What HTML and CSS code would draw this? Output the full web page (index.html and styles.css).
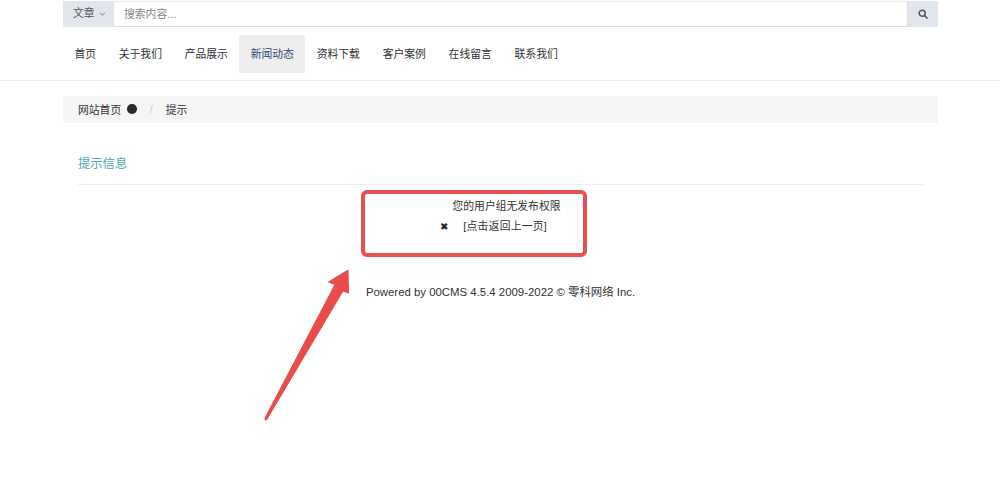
FILE: index.html
```html
<!DOCTYPE html>
<html lang="en">
<head>
    <meta charset="UTF-8">
    <title>提示信息</title>
    <link rel="stylesheet" href="styles.css">
</head>
<body>
    <header class="header">
        <div class="container">
            <div class="search">
                <div class="search-type">文章
                    <svg class="caret" viewBox="0 0 8 5" width="7" height="4"><path d="M1 1l3 3 3-3" fill="none" stroke="#667" stroke-width="1"/></svg>
                </div>
                <div class="search-input">搜索内容...</div>
                <div class="search-btn">
                    <svg viewBox="0 0 12 12" width="10" height="10"><circle cx="5" cy="5" r="3.6" fill="none" stroke="#555" stroke-width="1.8"/><path d="M7.8 7.800l3 3" stroke="#555" stroke-width="2" stroke-linecap="round"/></svg>
                </div>
            </div>
            <nav class="nav">
                <a class="nav-item">首页</a>
                <a class="nav-item">关于我们</a>
                <a class="nav-item">产品展示</a>
                <a class="nav-item active">新闻动态</a>
                <a class="nav-item">资料下载</a>
                <a class="nav-item">客户案例</a>
                <a class="nav-item">在线留言</a>
                <a class="nav-item">联系我们</a>
            </nav>
        </div>
    </header>

    <div class="container">
        <div class="breadcrumb">
            <span>网站首页</span>
            <span class="dot"></span>
            <span class="sep">/</span>
            <span>提示</span>
        </div>
        <div class="panel">
            <h3 class="panel-title">提示信息</h3>
            <div class="message">
                <div class="message-text">您的用户组无发布权限</div>
                <div class="message-back"><span class="cross">&#10006;</span><span class="back-link">[点击返回上一页]</span></div>
            </div>
            <div class="footer">Powered by 00CMS 4.5.4 2009-2022 © 零科网络 Inc.</div>
        </div>
    </div>

    <!-- annotation drawn over the page -->
    <div class="note-box"></div>
    <svg class="note-arrow" width="100" height="170" viewBox="0 0 100 170">
        <path d="M2 153 Q1.500 155.500 3.500 155 L80 26 L85.500 28 L85 5 L65.500 17 L72 19.500 Z" fill="#ea4b4b" stroke="#ea4b4b" stroke-width="1" stroke-linejoin="round"/>
    </svg>
</body>
</html>
```

FILE: styles.css
```css
* {
    box-sizing: border-box;
}

body {
    margin: 0;
    font-family: "Liberation Sans", "Noto Sans CJK SC", sans-serif;
    font-size: 10.800px;
    color: #333;
    background-color: #fff;
}

.container {
    width: 875px;
    margin-left: 63px;
}

.header {
    height: 81px;
    padding-top: 1px;
    border-bottom: 1px solid #eee;
}

.search {
    display: flex;
    height: 26px;
    line-height: 25px;
}

.search-type {
    width: 51px;
    padding-left: 10px;
    background-color: #e1e5ec;
    color: #555;
}

.caret {
    margin-left: 1px;
    vertical-align: 1px;
}

.search-input {
    flex: 1;
    padding-left: 10px;
    border: 1px solid #dcdcdc;
    border-left: 0;
    border-top-color: #eee;
    color: #888;
}

.search-btn {
    display: flex;
    width: 30px;
    align-items: center;
    justify-content: center;
    background-color: #e1e5ec;
}

.nav {
    display: flex;
    margin-top: 8px;
}

.nav-item {
    height: 38px;
    padding: 0 11.400px;
    line-height: 38px;
    color: #333;
}

.nav-item.active {
    background-color: #eee;
    color: #2f4a6d;
}

.breadcrumb {
    display: flex;
    height: 27px;
    margin-top: 15px;
    padding-left: 15px;
    padding-bottom: 1px;
    align-items: center;
    background-color: #f5f5f5;
}

.dot {
    width: 9.500px;
    height: 9.500px;
    margin-left: 6px;
    border-radius: 50%;
    background-color: #2b2b2b;
}

.sep {
    margin: 0 13px;
    color: #ccc;
}

.panel {
    padding: 0 15px;
}

.panel-title {
    height: 62px;
    margin: 0;
    padding-top: 33px;
    border-bottom: 1px solid #eee;
    font-size: 12.300px;
    font-weight: normal;
    line-height: 16px;
    color: #4aa8b8;
}

.message {
    padding-top: 14px;
    text-align: center;
}

.message-text {
    height: 20px;
    padding-left: 12px;
    line-height: 15px;
}

.message-back {
    display: flex;
    justify-content: center;
    padding-right: 14px;
    line-height: 15px;
}

.back-link {
    letter-spacing: 0.250px;
}

.cross {
    margin-right: 15px;
    font-family: "DejaVu Sans", sans-serif;
    font-size: 10px;
    color: #222;
}

.footer {
    margin-top: 51px;
    text-align: center;
    font-size: 11.400px;
    line-height: 15px;
}

.note-box {
    position: absolute;
    left: 361px;
    top: 190px;
    width: 226px;
    height: 67px;
    border: 4.500px solid #e65050;
    border-radius: 6px;
}

.note-arrow {
    position: absolute;
    left: 263px;
    top: 265px;
}
```
